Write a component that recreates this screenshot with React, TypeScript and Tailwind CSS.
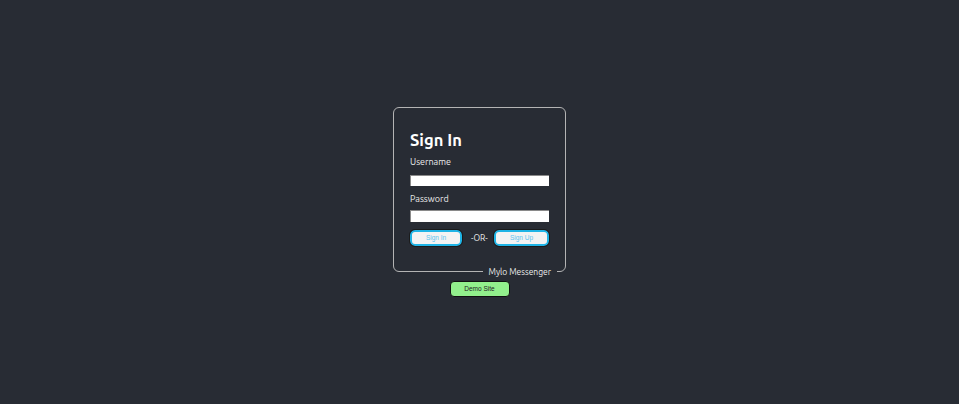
export default function App() {
  return (
    <div
      className="min-h-screen bg-[#282c34] flex flex-col items-center justify-center text-white"
      style={{ fontFamily: 'Ubuntu, Lato, "Noto Sans", sans-serif' }}
    >
      {/* Sign in card */}
      <div className="relative w-[173px] h-[165px] border-[1.5px] border-[#b4b4b4] rounded-[6px] pl-[16px] pr-[16px] pt-[21px]">
        <h1 className="text-[16.5px] leading-[22px] font-bold text-white">Sign In</h1>

        <label className="block mt-[5px] text-[9px] leading-[12px] text-[#ececec]">Username</label>
        <input
          type="text"
          className="block mt-[7px] w-[139px] h-[11px] bg-white border-t border-l border-[#8a8a8a] outline-none"
        />

        <label className="block mt-[7px] text-[9px] leading-[12px] text-[#ececec]">Password</label>
        <input
          type="password"
          className="block mt-[5px] w-[139px] h-[12px] bg-white border-t border-l border-[#8a8a8a] outline-none"
        />

        <div className="flex items-center mt-[8px]">
          <button className="w-[52px] h-[16px] rounded-[5px] bg-[#f3f3f3] border-2 border-[#1fb4e6] outline outline-1 outline-[#1b1b1b] text-[6.5px] text-[#5cc4f0] font-['Liberation_Sans',Arial,sans-serif]">
            Sign In
          </button>
          <span className="ml-[9px] text-[8.5px] text-[#ececec]">-OR-</span>
          <button className="ml-auto w-[55px] h-[16px] rounded-[5px] bg-[#f3f3f3] border-2 border-[#1fb4e6] outline outline-1 outline-[#1b1b1b] text-[6.5px] text-[#5cc4f0] font-['Liberation_Sans',Arial,sans-serif]">
            Sign Up
          </button>
        </div>

        <span className="absolute right-[8px] bottom-[-6px] bg-[#282c34] px-[6px] text-[8.5px] leading-[10px] text-[#ececec]">
          Mylo Messenger
        </span>
      </div>

      <button className="mt-[9px] w-[60px] h-[16px] rounded-[4px] bg-[#92f08c] border border-[#111] text-[6.5px] text-[#222] font-['Liberation_Sans',Arial,sans-serif]">
        Demo Site
      </button>
    </div>
  )
}
